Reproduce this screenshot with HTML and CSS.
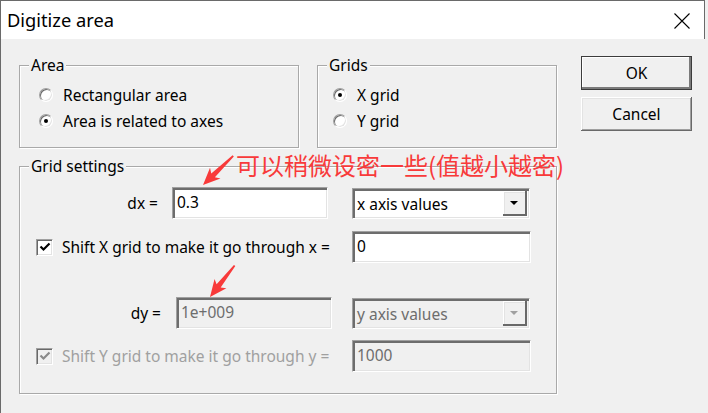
FILE: index.html
```html
<!DOCTYPE html>
<html lang="en">
<head>
    <meta charset="UTF-8">
    <meta name="viewport" content="width=device-width, initial-scale=1.0">
    <title>Digitize area</title>
    <link rel="stylesheet" href="styles.css">
</head>
<body>
    <div class="window">
        <header class="titlebar">
            <span class="title">Digitize area</span>
            <svg class="close-icon" width="16" height="16" viewBox="0 0 16 16">
                <path d="M0.5 0.5 L15.5 15.5 M15.5 0.5 L0.5 15.5" stroke="#000" stroke-width="1.1" fill="none"/>
            </svg>
        </header>

        <div class="dialog">
            <div class="top-row">
                <div class="group group-area">
                    <span class="group-title">Area</span>
                    <label class="radio-row"><span class="radio"></span>Rectangular area</label>
                    <label class="radio-row"><span class="radio checked"></span>Area is related to axes</label>
                </div>
                <div class="group group-grids">
                    <span class="group-title">Grids</span>
                    <label class="radio-row"><span class="radio checked"></span>X grid</label>
                    <label class="radio-row"><span class="radio"></span>Y grid</label>
                </div>
                <div class="buttons">
                    <button class="btn btn-default">OK</button>
                    <button class="btn">Cancel</button>
                </div>
            </div>

            <div class="group group-settings">
                <span class="group-title">Grid settings</span>

                <div class="setting-row">
                    <div class="setting-main">
                        <span class="field-label">dx =</span>
                        <span class="textbox">0.3</span>
                    </div>
                    <div class="combo">
                        <span class="combo-text">x axis values</span>
                        <span class="combo-btn"><span class="combo-arrow"></span></span>
                    </div>
                </div>

                <div class="setting-row row-gap">
                    <label class="check-row">
                        <span class="checkbox">
                            <svg width="12" height="12" viewBox="0 0 12 12"><path d="M1.5 5.5 L4.5 8.5 L10.5 2.5" stroke="#000" stroke-width="2.2" fill="none"/></svg>
                        </span>
                        Shift X grid to make it go through x =
                    </label>
                    <span class="textbox textbox-wide">0</span>
                </div>

                <div class="setting-row row-dy disabled">
                    <div class="setting-main setting-main-dy">
                        <span class="field-label">dy =</span>
                        <span class="textbox">1e+009</span>
                    </div>
                    <div class="combo">
                        <span class="combo-text">y axis values</span>
                        <span class="combo-btn"><span class="combo-arrow"></span></span>
                    </div>
                </div>

                <div class="setting-row row-last disabled">
                    <label class="check-row">
                        <span class="checkbox">
                            <svg width="12" height="12" viewBox="0 0 12 12"><path d="M1.5 5.5 L4.5 8.5 L10.5 2.5" stroke="#8a8a8a" stroke-width="2.2" fill="none"/></svg>
                        </span>
                        Shift Y grid to make it go through y =
                    </label>
                    <span class="textbox textbox-wide">1000</span>
                </div>
            </div>
        </div>
    </div>

    <!-- annotation drawn over the screenshot -->
    <div class="note">可以稍微设密一些(值越小越密)</div>
    <svg class="arrows" width="708" height="413" viewBox="0 0 708 413">
        <polygon transform="translate(203,185) rotate(-44)" points="0,0 17,-7.5 14,-2.6 42,-0.9 42,0.9 14,2.6 17,7.5" fill="#f83a3a"/>
        <polygon transform="translate(210,297) rotate(-52)" points="0,0 17,-7.5 14,-2.6 40,-0.9 40,0.9 14,2.6 17,7.5" fill="#f83a3a"/>
    </svg>
</body>
</html>
```

FILE: styles.css
```css
body {
    margin: 0;
    background: #f0f0f0;
    font-family: 'Noto Sans', 'Liberation Sans', sans-serif;
    font-size: 15.5px;
    color: #000;
    position: relative;
    height: 413px;
    overflow: hidden;
}
.window {
    border-left: 1px solid #6a6a6a;
    height: 413px;
}
.titlebar {
    width: 704px;
    height: 39px;
    box-sizing: border-box;
    border-top: 1px solid #6a6a6a;
    border-right: 1px solid #6a6a6a;
    background: #fff;
    display: flex;
    align-items: center;
    justify-content: space-between;
    padding: 0 14px 0 6px;
}
.title {
    font-size: 18.3px;
    margin-top: -1px;
}
.close-icon {
    margin-top: 1px;
}
.dialog {
    padding: 17px 0 0 18px;
}
.top-row {
    display: flex;
    align-items: flex-start;
}
.group {
    position: relative;
    box-sizing: border-box;
    border: 1px solid #a9a9a9;
    box-shadow: 1px 1px 0 #fff, inset 1px 1px 0 #fff;
}
.group-title {
    position: absolute;
    top: -11px;
    left: 9px;
    padding: 0 2px;
    background: #f0f0f0;
    line-height: 20px;
}
.group-area {
    width: 280px;
    height: 83px;
    margin-top: 9px;
    padding: 19px 0 0 19px;
}
.group-grids {
    width: 240px;
    height: 83px;
    margin: 9px 0 0 18px;
    padding: 19px 0 0 15px;
}
.radio-row {
    display: flex;
    align-items: center;
    gap: 10px;
    height: 20px;
    margin-bottom: 6px;
}
.radio {
    width: 14px;
    height: 14px;
    box-sizing: border-box;
    border-radius: 50%;
    background: #fff;
    border: 1px solid;
    border-color: #a0a0a0 #fff #fff #a0a0a0;
    box-shadow: inset 1px 1px 0 #696969, inset -1px -1px 0 #e3e3e3;
    display: inline-flex;
    align-items: center;
    justify-content: center;
}
.radio.checked::after {
    content: '';
    width: 4px;
    height: 4px;
    border-radius: 50%;
    background: #000;
}
.buttons {
    display: flex;
    flex-direction: column;
    gap: 7px;
    margin-left: 24px;
}
.btn {
    width: 111px;
    height: 34px;
    background: #f0f0f0;
    font-family: inherit;
    font-size: 15.5px;
    color: #000;
    border: none;
    box-shadow: inset -1px -1px 0 #696969, inset 1px 1px 0 #fff, inset -2px -2px 0 #a0a0a0, inset 2px 2px 0 #e3e3e3;
    padding: 0;
}
.btn-default {
    border: 1px solid #3c3c3c;
    box-shadow: inset -2px -2px 0 #7a7a7a, inset 1px 1px 0 #fff;
}
.group-settings {
    width: 538px;
    height: 228px;
    margin-top: 18px;
    padding-top: 20px;
}
.setting-row {
    display: grid;
    grid-template-columns: 332px 179px;
    align-items: center;
    height: 32px;
}
.row-gap {
    margin-top: 12px;
}
.row-dy {
    margin-top: 34px;
}
.row-last {
    margin-top: 11px;
}
.setting-main {
    display: flex;
    align-items: center;
    justify-content: flex-end;
    gap: 14px;
    padding-right: 24px;
}
.setting-main-dy {
    gap: 15px;
    padding-right: 20px;
}
.textbox {
    width: 156px;
    height: 32px;
    box-sizing: border-box;
    background: #fff;
    border: 1px solid;
    border-color: #a0a0a0 #fff #fff #a0a0a0;
    box-shadow: inset 2px 2px 0 #6d6d6d, inset -1px -1px 0 #e3e3e3;
    padding: 3px 0 0 4px;
    line-height: 22px;
}
.textbox-wide {
    width: 179px;
}
.combo {
    width: 178px;
    height: 31px;
    box-sizing: border-box;
    background: #fff;
    border: 1px solid;
    border-color: #a0a0a0 #fff #fff #a0a0a0;
    box-shadow: inset 2px 2px 0 #6d6d6d, inset -1px -1px 0 #e3e3e3;
    display: flex;
    align-items: center;
    justify-content: space-between;
    padding: 2px 2px 1px 4px;
}
.combo-btn {
    width: 24px;
    height: 25px;
    box-sizing: border-box;
    background: #f0f0f0;
    box-shadow: inset -2px -2px 0 #696969, inset 1px 1px 0 #fff, inset 2px 2px 0 #e3e3e3;
    display: flex;
    align-items: center;
    justify-content: center;
    padding: 0 2px 2px 0;
}
.combo-arrow {
    width: 0;
    height: 0;
    border-left: 4px solid transparent;
    border-right: 4px solid transparent;
    border-top: 4px solid #000;
}
.check-row {
    display: flex;
    align-items: center;
    gap: 9px;
    padding-left: 16px;
}
.checkbox {
    width: 17px;
    height: 17px;
    box-sizing: border-box;
    background: #fff;
    border: 1px solid;
    border-color: #a0a0a0 #fff #fff #a0a0a0;
    box-shadow: inset 1px 1px 0 #696969, inset -1px -1px 0 #e3e3e3;
    display: flex;
    align-items: center;
    justify-content: center;
}
.disabled .textbox,
.disabled .combo,
.disabled .checkbox {
    background: #f0f0f0;
    color: #6d6d6d;
}
.disabled .combo-arrow {
    border-top-color: #a0a0a0;
}
.disabled .check-row {
    color: #a0a0a0;
}
.note {
    position: absolute;
    left: 236px;
    top: 149px;
    font-family: 'Noto Sans CJK SC', sans-serif;
    font-size: 24px;
    line-height: 32px;
    color: #f83a3a;
    white-space: nowrap;
}
.arrows {
    position: absolute;
    left: 0;
    top: 0;
    pointer-events: none;
}
```
